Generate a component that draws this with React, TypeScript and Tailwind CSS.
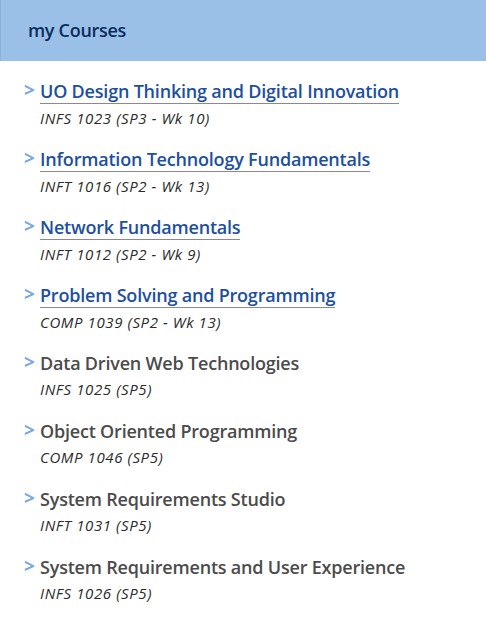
const courses = [
  { title: "UO Design Thinking and Digital Innovation", code: "INFS 1023 (SP3 - Wk 10)", link: true },
  { title: "Information Technology Fundamentals", code: "INFT 1016 (SP2 - Wk 13)", link: true },
  { title: "Network Fundamentals", code: "INFT 1012 (SP2 - Wk 9)", link: true },
  { title: "Problem Solving and Programming", code: "COMP 1039 (SP2 - Wk 13)", link: true },
  { title: "Data Driven Web Technologies", code: "INFS 1025 (SP5)", link: false },
  { title: "Object Oriented Programming", code: "COMP 1046 (SP5)", link: false },
  { title: "System Requirements Studio", code: "INFT 1031 (SP5)", link: false },
  { title: "System Requirements and User Experience", code: "INFS 1026 (SP5)", link: false },
];

export default function App() {
  return (
    <div className="w-[486px] h-[633px] bg-white font-['Open_Sans',sans-serif]">
      {/* header */}
      <div className="h-[61px] bg-[#9bc0e7] border-l border-[#8cb2dc] flex items-center pl-[27px]">
        <h2 className="text-[18px] font-semibold text-[#0b2c5e] tracking-[-0.3px]">my Courses</h2>
      </div>

      <ul className="pt-[19px] pl-[24px]">
        {courses.map((c) => (
          <li key={c.title} className="flex h-[68px]">
            <span className="text-[#7aa8e0] text-[19px] font-bold leading-[20px] w-[16px]">&gt;</span>
            <div>
              <a
                href="#"
                className={`block leading-[22px] text-[18px] font-semibold tracking-[-0.2px] ${
                  c.link ? "text-[#1d4f9f] border-b border-[#8a8a8a] pb-[1px]" : "text-[#4b4b4b]"
                }`}
              >
                {c.title}
              </a>
              <p className={`italic text-[15px] tracking-[0.6px] text-[#2b2b2b] leading-[20px] ${c.link ? "mt-[4px]" : "mt-[5px]"}`}>
                {c.code}
              </p>
            </div>
          </li>
        ))}
      </ul>
    </div>
  );
}
